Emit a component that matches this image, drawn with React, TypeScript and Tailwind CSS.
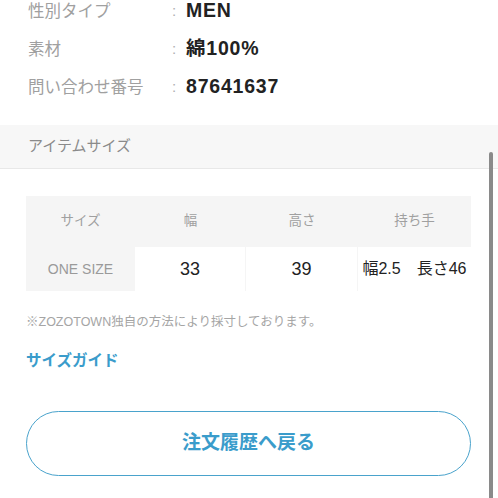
const font = { fontFamily: '"Liberation Sans", "Noto Sans CJK JP", sans-serif' };

const specs = [
  { label: '性別タイプ', value: 'MEN' },
  { label: '素材', value: '綿100%' },
  { label: '問い合わせ番号', value: '87641637' },
];

const headers = ['サイズ', '幅', '高さ', '持ち手'];

export default function App() {
  return (
    <div className="relative w-[498px] h-[498px] overflow-hidden bg-white" style={font}>
      {/* product specs */}
      <div className="flex flex-col pl-[28px] -mt-[8px]">
        {specs.map((s) => (
          <div key={s.label} className="flex items-center h-[38px]">
            <span className="w-[144px] text-[16.5px] text-[#a0a0a0]">{s.label}</span>
            <span className="w-[14px] text-[15px] text-[#b0b0b0]">:</span>
            <span className="text-[19.5px] font-bold tracking-[0.8px] text-[#222]">{s.value}</span>
          </div>
        ))}
      </div>

      {/* section header */}
      <div className="mt-[19px] h-[44px] bg-[#f7f7f7] border-b border-[#e8e8e8] flex items-center pl-[28px]">
        <span className="text-[15px] text-[#8a8a8a]">アイテムサイズ</span>
      </div>

      <div className="pl-[26px] pr-[27px] pt-[27px]">
        <div className="grid grid-cols-[109px_111px_112px_113px] bg-[#f5f5f5]">
          {headers.map((h) => (
            <div key={h} className="h-[51px] flex items-center justify-center text-[13.5px] text-[#a0a0a0]">
              {h}
            </div>
          ))}
          <div className="h-[44px] flex items-center justify-center text-[14px] text-[#9a9a9a]">ONE SIZE</div>
          <div className="h-[44px] mr-[1px] bg-white flex items-center justify-center text-[18px] text-[#222]">33</div>
          <div className="h-[44px] mr-[1px] bg-white flex items-center justify-center text-[18px] text-[#222]">39</div>
          <div className="h-[44px] bg-white flex items-center justify-center text-[16px] text-[#222] whitespace-nowrap">
            幅2.5　長さ46
          </div>
        </div>

        <p className="mt-[22px] text-[12.5px] text-[#a5a5a5]">※ZOZOTOWN独自の方法により採寸しております。</p>

        <p className="mt-[17px] text-[15.5px] font-bold text-[#3a9ccb]">サイズガイド</p>

        <button className="mt-[39px] w-[445px] h-[65px] rounded-full border border-[#4aa3cc] flex items-center justify-center text-[19px] font-bold text-[#3a9ccb]">
          注文履歴へ戻る
        </button>
      </div>

      {/* scrollbar */}
      <div className="absolute left-[489px] top-[152px] w-[4px] h-[346px] rounded-t-full bg-[#8a8a8a]" />
    </div>
  );
}
